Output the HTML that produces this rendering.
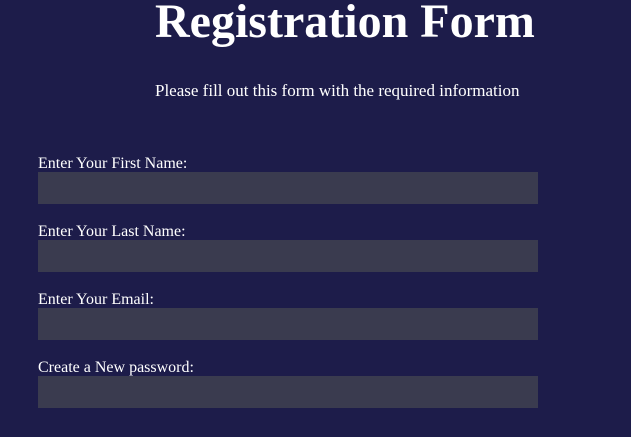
<!DOCTYPE html>
<html><head><style>
body{margin:0;width:631px;height:437px;background:#1d1c4a;color:#fff;font-family:"Liberation Serif",serif;overflow:hidden;position:relative}
h1{position:absolute;left:155px;top:-6px;margin:0;font-size:48px;font-weight:bold;line-height:56px;white-space:nowrap}
.sub{position:absolute;left:155px;top:81px;font-size:17px;line-height:19px;white-space:nowrap}
.l{position:absolute;left:38px;font-size:16px;line-height:18px;white-space:nowrap}
.i{position:absolute;left:38px;width:500px;height:32px;background:#3a3b4f}
</style></head><body>
<h1>Registration Form</h1>
<div class="sub">Please fill out this form with the required information</div>
<div class="l" style="top:155px">Enter Your First Name:</div><div class="i" style="top:172px"></div>
<div class="l" style="top:223px">Enter Your Last Name:</div><div class="i" style="top:240px"></div>
<div class="l" style="top:291px">Enter Your Email:</div><div class="i" style="top:308px"></div>
<div class="l" style="top:359px">Create a New password:</div><div class="i" style="top:376px"></div>
</body></html>
